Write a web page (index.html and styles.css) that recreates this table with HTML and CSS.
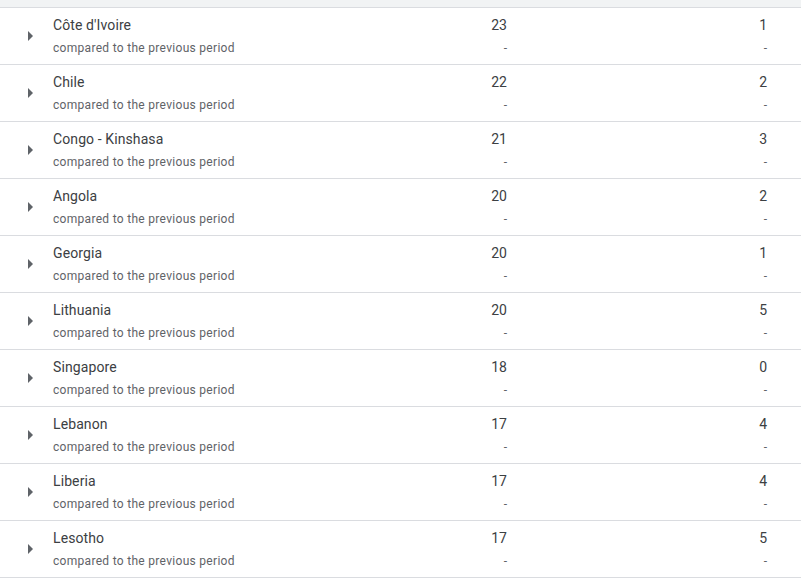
FILE: index.html
```html
<!DOCTYPE html>
<html lang="en">
<head>
<meta charset="utf-8">
<title>Countries</title>
<link rel="stylesheet" href="styles.css">
</head>
<body>
<div class="table">
  <div class="head"></div>
  <div class="row">
    <div class="toggle"><svg viewBox="0 0 24 24" width="24" height="24"><path d="M10 17l5-5-5-5v10z"/></svg></div>
    <div class="cell name"><div class="main">Côte d'Ivoire</div><div class="sub">compared to the previous period</div></div>
    <div class="cell num"><div class="main">23</div><div class="sub">-</div></div>
    <div class="cell num"><div class="main">1</div><div class="sub">-</div></div>
  </div>
  <div class="row">
    <div class="toggle"><svg viewBox="0 0 24 24" width="24" height="24"><path d="M10 17l5-5-5-5v10z"/></svg></div>
    <div class="cell name"><div class="main">Chile</div><div class="sub">compared to the previous period</div></div>
    <div class="cell num"><div class="main">22</div><div class="sub">-</div></div>
    <div class="cell num"><div class="main">2</div><div class="sub">-</div></div>
  </div>
  <div class="row">
    <div class="toggle"><svg viewBox="0 0 24 24" width="24" height="24"><path d="M10 17l5-5-5-5v10z"/></svg></div>
    <div class="cell name"><div class="main">Congo - Kinshasa</div><div class="sub">compared to the previous period</div></div>
    <div class="cell num"><div class="main">21</div><div class="sub">-</div></div>
    <div class="cell num"><div class="main">3</div><div class="sub">-</div></div>
  </div>
  <div class="row">
    <div class="toggle"><svg viewBox="0 0 24 24" width="24" height="24"><path d="M10 17l5-5-5-5v10z"/></svg></div>
    <div class="cell name"><div class="main">Angola</div><div class="sub">compared to the previous period</div></div>
    <div class="cell num"><div class="main">20</div><div class="sub">-</div></div>
    <div class="cell num"><div class="main">2</div><div class="sub">-</div></div>
  </div>
  <div class="row">
    <div class="toggle"><svg viewBox="0 0 24 24" width="24" height="24"><path d="M10 17l5-5-5-5v10z"/></svg></div>
    <div class="cell name"><div class="main">Georgia</div><div class="sub">compared to the previous period</div></div>
    <div class="cell num"><div class="main">20</div><div class="sub">-</div></div>
    <div class="cell num"><div class="main">1</div><div class="sub">-</div></div>
  </div>
  <div class="row">
    <div class="toggle"><svg viewBox="0 0 24 24" width="24" height="24"><path d="M10 17l5-5-5-5v10z"/></svg></div>
    <div class="cell name"><div class="main">Lithuania</div><div class="sub">compared to the previous period</div></div>
    <div class="cell num"><div class="main">20</div><div class="sub">-</div></div>
    <div class="cell num"><div class="main">5</div><div class="sub">-</div></div>
  </div>
  <div class="row">
    <div class="toggle"><svg viewBox="0 0 24 24" width="24" height="24"><path d="M10 17l5-5-5-5v10z"/></svg></div>
    <div class="cell name"><div class="main">Singapore</div><div class="sub">compared to the previous period</div></div>
    <div class="cell num"><div class="main">18</div><div class="sub">-</div></div>
    <div class="cell num"><div class="main">0</div><div class="sub">-</div></div>
  </div>
  <div class="row">
    <div class="toggle"><svg viewBox="0 0 24 24" width="24" height="24"><path d="M10 17l5-5-5-5v10z"/></svg></div>
    <div class="cell name"><div class="main">Lebanon</div><div class="sub">compared to the previous period</div></div>
    <div class="cell num"><div class="main">17</div><div class="sub">-</div></div>
    <div class="cell num"><div class="main">4</div><div class="sub">-</div></div>
  </div>
  <div class="row">
    <div class="toggle"><svg viewBox="0 0 24 24" width="24" height="24"><path d="M10 17l5-5-5-5v10z"/></svg></div>
    <div class="cell name"><div class="main">Liberia</div><div class="sub">compared to the previous period</div></div>
    <div class="cell num"><div class="main">17</div><div class="sub">-</div></div>
    <div class="cell num"><div class="main">4</div><div class="sub">-</div></div>
  </div>
  <div class="row">
    <div class="toggle"><svg viewBox="0 0 24 24" width="24" height="24"><path d="M10 17l5-5-5-5v10z"/></svg></div>
    <div class="cell name"><div class="main">Lesotho</div><div class="sub">compared to the previous period</div></div>
    <div class="cell num"><div class="main">17</div><div class="sub">-</div></div>
    <div class="cell num"><div class="main">5</div><div class="sub">-</div></div>
  </div>
</div>
</body>
</html>
```
FILE: styles.css
```css
html, body {
  margin: 0;
  padding: 0;
  background: #ffffff;
}
body {
  font-family: Roboto, "Noto Sans", Arial, sans-serif;
  color: #3c4043;
}
.table {
  width: 801px;
}
.head {
  height: 7px;
  background: #f1f3f4;
  border-bottom: 1px solid #dadce0;
}
.row {
  display: grid;
  grid-template-columns: 53px 1fr 120px 260px;
  padding-right: 34px;
  height: 56px;
  border-bottom: 1px solid #dadce0;
}
.toggle {
  display: flex;
  align-items: center;
  padding-left: 18px;
}
.toggle svg {
  display: block;
  fill: #5f6368;
}
.cell {
  padding-top: 7px;
}
.main {
  font-size: 14px;
  line-height: 20px;
  letter-spacing: 0.1px;
  color: #3c4043;
}
.sub {
  margin-top: 3px;
  font-size: 12px;
  line-height: 20px;
  letter-spacing: 0.3px;
  color: #5f6368;
}
.num .main,
.num .sub {
  letter-spacing: 0;
}
.num {
  text-align: right;
}
```
